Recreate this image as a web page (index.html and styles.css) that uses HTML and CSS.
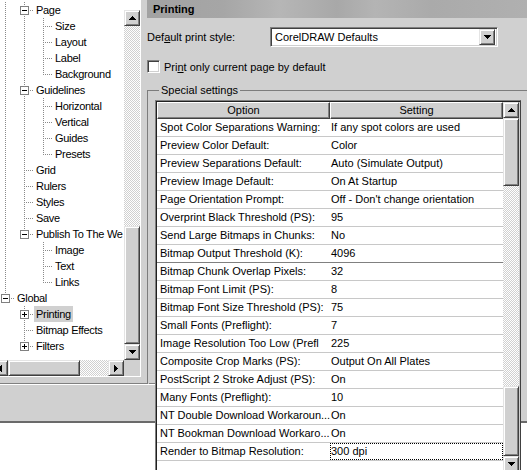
FILE: index.html
```html
<!DOCTYPE html>
<html>
<head>
<meta charset="utf-8">
<link rel="stylesheet" href="styles.css">
</head>
<body>
<div class="screen">
  <div class="dialog">
    <div class="left">
      <div class="tree-frame">
        <div class="tree-main">
          <div class="tree">
            <div class="row"><span class="c v"></span><span class="c t"><i class="box minus"></i></span><span class="lbl">Page</span></div>
            <div class="row"><span class="c v"></span><span class="c v"></span><span class="c t"></span><span class="lbl">Size</span></div>
            <div class="row"><span class="c v"></span><span class="c v"></span><span class="c t"></span><span class="lbl">Layout</span></div>
            <div class="row"><span class="c v"></span><span class="c v"></span><span class="c t"></span><span class="lbl">Label</span></div>
            <div class="row"><span class="c v"></span><span class="c v"></span><span class="c l"></span><span class="lbl">Background</span></div>
            <div class="row"><span class="c v"></span><span class="c t"><i class="box minus"></i></span><span class="lbl">Guidelines</span></div>
            <div class="row"><span class="c v"></span><span class="c v"></span><span class="c t"></span><span class="lbl">Horizontal</span></div>
            <div class="row"><span class="c v"></span><span class="c v"></span><span class="c t"></span><span class="lbl">Vertical</span></div>
            <div class="row"><span class="c v"></span><span class="c v"></span><span class="c t"></span><span class="lbl">Guides</span></div>
            <div class="row"><span class="c v"></span><span class="c v"></span><span class="c l"></span><span class="lbl">Presets</span></div>
            <div class="row"><span class="c v"></span><span class="c t"></span><span class="lbl">Grid</span></div>
            <div class="row"><span class="c v"></span><span class="c t"></span><span class="lbl">Rulers</span></div>
            <div class="row"><span class="c v"></span><span class="c t"></span><span class="lbl">Styles</span></div>
            <div class="row"><span class="c v"></span><span class="c t"></span><span class="lbl">Save</span></div>
            <div class="row"><span class="c v"></span><span class="c l"><i class="box minus"></i></span><span class="lbl">Publish To The We</span></div>
            <div class="row"><span class="c v"></span><span class="c e"></span><span class="c t"></span><span class="lbl">Image</span></div>
            <div class="row"><span class="c v"></span><span class="c e"></span><span class="c t"></span><span class="lbl">Text</span></div>
            <div class="row"><span class="c v"></span><span class="c e"></span><span class="c l"></span><span class="lbl">Links</span></div>
            <div class="row"><span class="c l"><i class="box minus"></i></span><span class="lbl">Global</span></div>
            <div class="row"><span class="c e"></span><span class="c t"><i class="box plus"></i></span><span class="lbl sel">Printing</span></div>
            <div class="row"><span class="c e"></span><span class="c t"></span><span class="lbl">Bitmap Effects</span></div>
            <div class="row"><span class="c e"></span><span class="c l"><i class="box plus"></i></span><span class="lbl">Filters</span></div>
          </div>
          <div class="vscroll">
            <div class="vs-top"></div>
            <div class="sbtn"><svg width="7" height="4" viewBox="0 0 7 4"><path d="M3 0h1v1h1v1h1v1h1v1H0V3h1V2h1V1h1z"/></svg></div>
            <div class="track"></div>
            <div class="thumb tree-thumb"></div>
            <div class="sbtn"><svg width="7" height="4" viewBox="0 0 7 4"><path d="M0 0h7v1H6v1H5v1H4v1H3V3H2V2H1V1H0z"/></svg></div>
          </div>
        </div>
        <div class="hrow">
          <div class="hscroll">
            <div class="sbtn"><svg width="4" height="7" viewBox="0 0 4 7"><path d="M3 0h1v7H3V6H2V5H1V4H0V3h1V2h1V1h1z"/></svg></div>
            <div class="thumb hthumb"></div>
            <div class="track"></div>
            <div class="sbtn"><svg width="4" height="7" viewBox="0 0 4 7"><path d="M0 0h1v1h1v1h1v1h1v1H3v1H2v1H1v1H0z"/></svg></div>
          </div>
          <div class="corner"></div>
        </div>
      </div>
      <div class="left-sep"></div>
    </div>

    <div class="right">
      <div class="title">Printing</div>
      <div class="style-row">
        <span class="label">Def<u>a</u>ult print style:</span>
        <div class="combo">
          <span class="combo-text">CorelDRAW Defaults</span>
          <div class="sbtn combo-btn"><svg width="7" height="4" viewBox="0 0 7 4"><path d="M0 0h7v1H6v1H5v1H4v1H3V3H2V2H1V1H0z"/></svg></div>
        </div>
      </div>
      <div class="check-row">
        <span class="checkbox"></span>
        <span class="label">Pri<u>n</u>t only current page by default</span>
      </div>
      <fieldset class="group">
        <legend>Special settings</legend>
        <div class="list">
          <div class="list-main">
            <div class="list-head">
              <div class="hcell">Option</div>
              <div class="hcell">Setting</div>
            </div>
            <div class="lrow"><span class="cell">Spot Color Separations Warning:</span><span class="cell val">If any spot colors are used</span></div>
            <div class="lrow"><span class="cell">Preview Color Default:</span><span class="cell val">Color</span></div>
            <div class="lrow"><span class="cell">Preview Separations Default:</span><span class="cell val">Auto (Simulate Output)</span></div>
            <div class="lrow"><span class="cell">Preview Image Default:</span><span class="cell val">On At Startup</span></div>
            <div class="lrow"><span class="cell">Page Orientation Prompt:</span><span class="cell val">Off - Don't change orientation</span></div>
            <div class="lrow"><span class="cell">Overprint Black Threshold (PS):</span><span class="cell val">95</span></div>
            <div class="lrow"><span class="cell">Send Large Bitmaps in Chunks:</span><span class="cell val">No</span></div>
            <div class="lrow dark"><span class="cell">Bitmap Output Threshold (K):</span><span class="cell val">4096</span></div>
            <div class="lrow"><span class="cell">Bitmap Chunk Overlap Pixels:</span><span class="cell val">32</span></div>
            <div class="lrow"><span class="cell">Bitmap Font Limit (PS):</span><span class="cell val">8</span></div>
            <div class="lrow"><span class="cell">Bitmap Font Size Threshold (PS):</span><span class="cell val">75</span></div>
            <div class="lrow"><span class="cell">Small Fonts (Preflight):</span><span class="cell val">7</span></div>
            <div class="lrow"><span class="cell">Image Resolution Too Low (Prefl</span><span class="cell val">225</span></div>
            <div class="lrow"><span class="cell">Composite Crop Marks (PS):</span><span class="cell val">Output On All Plates</span></div>
            <div class="lrow"><span class="cell">PostScript 2 Stroke Adjust (PS):</span><span class="cell val">On</span></div>
            <div class="lrow"><span class="cell">Many Fonts (Preflight):</span><span class="cell val">10</span></div>
            <div class="lrow"><span class="cell">NT Double Download Workaroun...</span><span class="cell val">On</span></div>
            <div class="lrow"><span class="cell">NT Bookman Download Workaro...</span><span class="cell val">On</span></div>
            <div class="lrow"><span class="cell">Render to Bitmap Resolution:</span><span class="cell val focus">300 dpi</span></div>
            <div class="lrow"><span class="cell"></span><span class="cell val"></span></div>
          </div>
          <div class="vscroll list-scroll">
            <div class="sbtn"><svg width="7" height="4" viewBox="0 0 7 4"><path d="M3 0h1v1h1v1h1v1h1v1H0V3h1V2h1V1h1z"/></svg></div>
            <div class="thumb lthumb1"></div>
            <div class="track"></div>
            <div class="thumb lthumb2"></div>
            <div class="sbtn"><svg width="7" height="4" viewBox="0 0 7 4"><path d="M0 0h7v1H6v1H5v1H4v1H3V3H2V2H1V1H0z"/></svg></div>
          </div>
        </div>
      </fieldset>
    </div>
  </div>
</div>
</body>
</html>
```

FILE: styles.css
```css
* { box-sizing: border-box; }
html, body { margin: 0; padding: 0; }
body {
  width: 527px;
  height: 470px;
  overflow: hidden;
  background: #fff;
  font-family: "Liberation Sans", Arial, sans-serif;
  font-size: 11px;
  color: #000;
}
.screen { width: 527px; height: 470px; overflow: hidden; }
.dialog {
  display: flex;
  height: 423px;
  background: #d0d0d0;
  border-bottom: 2px solid #6a6a6a;
}
.left { width: 147px; flex: none; display: flex; flex-direction: column; }
.tree-frame {
  width: 141px;
  height: 377px;
  border-right: 1px solid #fff;
  border-bottom: 1px solid #fff;
  display: flex;
  flex-direction: column;
}
.tree-main { display: flex; height: 360px; }
.tree {
  width: 124px;
  height: 360px;
  background: #fff;
  overflow: hidden;
  padding-top: 2px;
}
.row { display: flex; height: 16px; margin-left: -4px; white-space: nowrap; }
.c { width: 19px; height: 16px; flex: none; display: flex; align-items: center; }
.v {
  background: repeating-linear-gradient(#8a8a8a 0 1px, transparent 1px 2px) 9px 0 / 1px 16px no-repeat;
}
.t {
  background:
    repeating-linear-gradient(#8a8a8a 0 1px, transparent 1px 2px) 9px 0 / 1px 16px no-repeat,
    repeating-linear-gradient(to right, #8a8a8a 0 1px, transparent 1px 2px) 11px 8px / 8px 1px no-repeat;
}
.l {
  background:
    repeating-linear-gradient(#8a8a8a 0 1px, transparent 1px 2px) 9px 0 / 1px 9px no-repeat,
    repeating-linear-gradient(to right, #8a8a8a 0 1px, transparent 1px 2px) 11px 8px / 8px 1px no-repeat;
}
.box {
  width: 9px; height: 9px;
  margin-left: 5px;
  border: 1px solid #808080;
  background: linear-gradient(#000, #000) 1px 3px / 5px 1px no-repeat, #fff;
}
.box.plus {
  background:
    linear-gradient(#000, #000) 1px 3px / 5px 1px no-repeat,
    linear-gradient(#000, #000) 3px 1px / 1px 5px no-repeat, #fff;
}
.lbl { line-height: 16px; padding: 0 2px; height: 16px; letter-spacing: -0.3px; }
.lbl.sel { background: #d0d0d0; }

/* scrollbars */
.vscroll { width: 16px; flex: none; display: flex; flex-direction: column; background: #d0d0d0; }
.vs-top { height: 10px; background: #fff; }
.sbtn {
  width: 16px; height: 16px; flex: none;
  background: #d0d0d0;
  border-top: 1px solid #e4e4e4;
  border-left: 1px solid #e4e4e4;
  border-right: 1px solid #404040;
  border-bottom: 1px solid #404040;
  box-shadow: inset 1px 1px #fff, inset -1px -1px #808080;
  display: flex; align-items: center; justify-content: center;
}
.sbtn svg { display: block; fill: #000; }
.track {
  flex: 1;
  background: repeating-conic-gradient(#fff 0 25%, #d0d0d0 0 50%) 0 0 / 2px 2px;
}
.thumb {
  flex: none;
  background: #d0d0d0;
  border-top: 1px solid #e4e4e4;
  border-left: 1px solid #e4e4e4;
  border-right: 1px solid #404040;
  border-bottom: 1px solid #404040;
  box-shadow: inset 1px 1px #fff, inset -1px -1px #808080;
}
.tree-thumb { height: 118px; }
.hrow { display: flex; height: 16px; }
.hscroll { display: flex; margin-left: -8px; width: 132px; }
.hthumb { width: 72px; }
.corner { width: 16px; background: #d0d0d0; }
.left-sep {
  margin-top: 6px;
  height: 2px;
  width: 155px;
  border-top: 1px solid #808080;
  border-bottom: 1px solid #fff;
}

/* right */
.right { flex: 1; min-width: 0; display: flex; flex-direction: column; }
.title {
  height: 18px;
  line-height: 18px;
  padding-left: 6px;
  font-weight: bold;
  background: linear-gradient(to right, #a2a2a2 0, #a6a6a6 20%, #b6b6b6 35%, #a8a8a8 50%, #b4b4b4 60%, #aaaaaa 75%, #b0b0b0 100%);
}
.style-row { display: flex; align-items: center; margin-top: 9px; height: 20px; }
.style-row .label { width: 123px; }
.combo {
  width: 228px; height: 20px;
  background: #fff;
  border-top: 1px solid #808080;
  border-left: 1px solid #808080;
  border-right: 1px solid #fff;
  border-bottom: 1px solid #fff;
  box-shadow: inset 1px 1px #404040, inset -1px -1px #d0d0d0;
  display: flex; align-items: center;
  padding: 2px;
}
.combo-text { flex: 1; padding-left: 2px; }
.combo-btn { width: 16px; height: 16px; }
.check-row { display: flex; align-items: center; margin-top: 13px; height: 13px; }
.checkbox {
  width: 13px; height: 13px;
  background: #fff;
  border-top: 1px solid #808080;
  border-left: 1px solid #808080;
  border-right: 1px solid #fff;
  border-bottom: 1px solid #fff;
  box-shadow: inset 1px 1px #404040, inset -1px -1px #d0d0d0;
  margin-right: 4px;
}
.group {
  margin: 11px 0 0 0;
  padding: 3px 0 0 6px;
  width: 400px;
  height: 300px;
  border: 2px groove #d0d0d0;
  border-right: none;
  border-bottom: none;
  min-width: 0;
}
.group legend { padding: 0 2px; margin-left: 4px; line-height: 13px; }
.list {
  display: flex;
  width: 366px;
  height: 372px;
  border-top: 1px solid #808080;
  border-left: 1px solid #808080;
  border-right: 1px solid #404040;
  background: #fff;
  padding: 1px 0 0 1px;
  box-shadow: inset 1px 1px #202020;
}
.list-main { width: 346px; flex: none; }
.list-head { display: flex; height: 17px; }
.hcell {
  width: 173px; height: 17px;
  text-align: center; line-height: 15px;
  background: #d0d0d0;
  border-top: 1px solid #fff;
  border-left: 1px solid #fff;
  border-right: 1px solid #404040;
  border-bottom: 1px solid #404040;
  box-shadow: inset -1px -1px #808080;
}
.lrow { display: flex; height: 18px; border-bottom: 1px solid #c8c8c8; }
.lrow.dark { border-bottom-color: #808080; }
.cell {
  width: 173px; flex: none;
  line-height: 17px;
  padding-left: 3px;
  white-space: nowrap;
  overflow: hidden;
}
.cell.val { padding-left: 1px; }
.cell.focus { outline: 1px dotted #000; outline-offset: -1px; }
.list-scroll { width: 17px; padding-right: 1px; }
.lthumb1 { height: 68px; }
.lthumb2 { height: 70px; }
```
